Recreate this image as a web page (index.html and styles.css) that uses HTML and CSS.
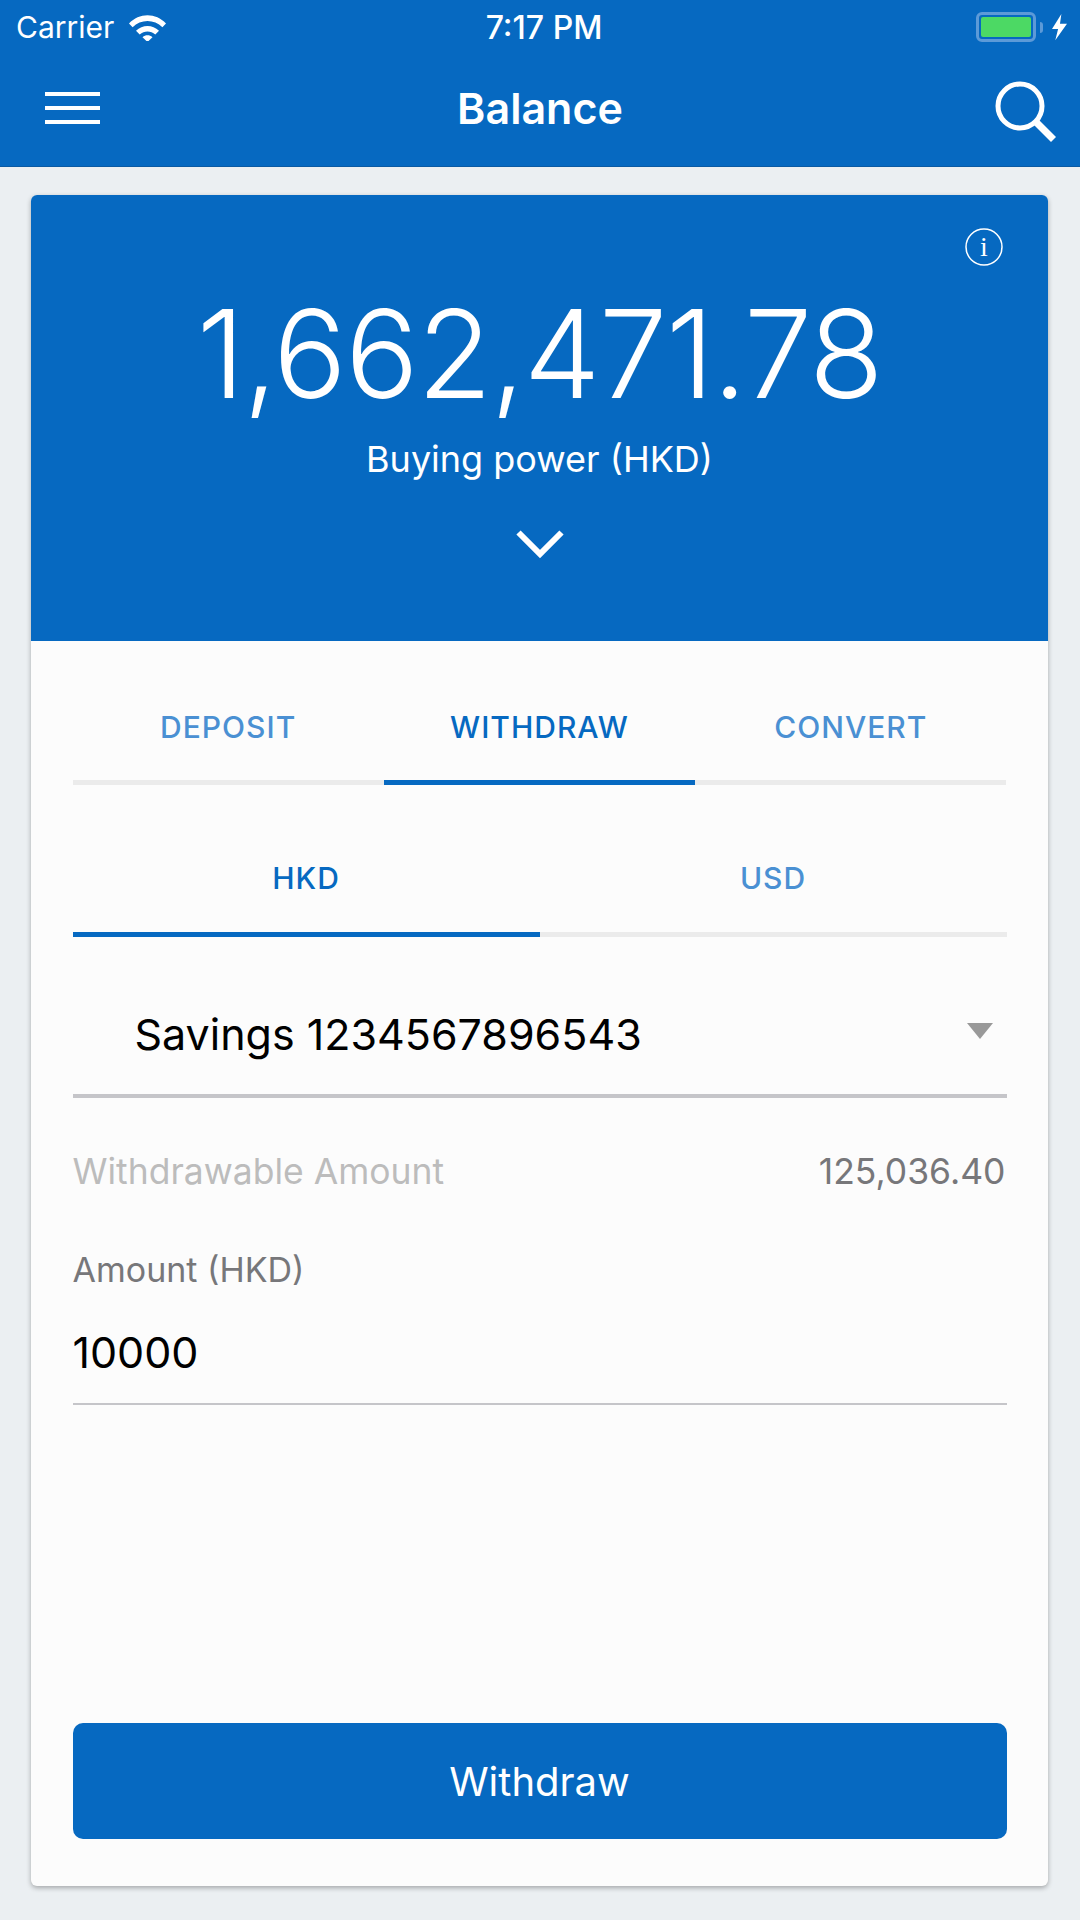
FILE: index.html
```html
<!DOCTYPE html>
<html lang="en">
<head>
    <meta charset="UTF-8">
    <meta name="viewport" content="width=device-width, initial-scale=1.0">
    <title>Balance</title>
    <link rel="stylesheet" href="styles.css">
</head>
<body>
    <header class="top">
        <div class="status">
            <div class="status_left">
                <span>Carrier</span>
                <svg class="wifi" width="37" height="27" viewBox="0 0 37 27">
                    <path d="M0 9.5C10-1.5 27-1.5 37 9.5l-3.6 3.8C25.300 5 11.700 5 3.600 13.300z" fill="#fff"/>
                    <path d="M7 16.800c6.500-6.500 16.500-6.500 23 0l-3.700 3.800c-4.500-4.200-11.100-4.200-15.600 0z" fill="#fff"/>
                    <path d="M13.500 23.200c3-2.600 7-2.600 10 0l-5 4.800z" fill="#fff"/>
                </svg>
            </div>
            <div class="status_time">7:17 PM</div>
            <div class="status_right">
                <div class="battery"><div class="battery_fill"></div></div>
                <div class="battery_tip"></div>
                <svg class="bolt" width="15" height="28" viewBox="0 0 16 28">
                    <path d="M10 0L0 16h6.500L3.500 28 16 10.500H8.500z" fill="#fff"/>
                </svg>
            </div>
        </div>
        <div class="nav">
            <div class="menu_icon"><i></i><i></i><i></i></div>
            <div class="nav_title">Balance</div>
            <svg class="search" width="62" height="62" viewBox="0 0 62 62">
                <circle cx="25" cy="25" r="22" fill="none" stroke="#fff" stroke-width="5"/>
                <path d="M41 41L58.500 58.500" stroke="#fff" stroke-width="7" fill="none"/>
            </svg>
        </div>
    </header>

    <main class="card">
        <section class="power">
            <svg class="info" width="38" height="38" viewBox="0 0 38 38">
                <circle cx="19" cy="19" r="18" fill="none" stroke="#fff" stroke-width="1.500"/>
                <text x="19" y="28" text-anchor="middle" class="info_i">i</text>
            </svg>
            <div class="power_num">1,662,471.78</div>
            <div class="power_label">Buying power (HKD)</div>
            <svg class="chevron" width="48" height="30" viewBox="0 0 48 30">
                <path d="M2.500 3.500L24 25 45.500 3.500" fill="none" stroke="#fff" stroke-width="6"/>
            </svg>
        </section>

        <section class="form">
            <div class="tabs tabs_main">
                <div class="tab">DEPOSIT</div>
                <div class="tab active">WITHDRAW</div>
                <div class="tab">CONVERT</div>
            </div>
            <div class="tabs tabs_sub">
                <div class="tab active">HKD</div>
                <div class="tab">USD</div>
            </div>

            <div class="select">
                <span>Savings 1234567896543</span>
                <div class="select_arrow"></div>
            </div>

            <div class="limit">
                <span class="limit_label">Withdrawable Amount</span>
                <span class="limit_value">125,036.40</span>
            </div>

            <div class="field_label">Amount (HKD)</div>
            <div class="field_value">10000</div>

            <button class="submit">Withdraw</button>
        </section>
    </main>
</body>
</html>
```

FILE: styles.css
```css
*{margin:0;padding:0;box-sizing:border-box;}
html,body{width:1080px;height:1920px;}
body{
    background:#ebeff2;
    font-family:Inter,"Liberation Sans",sans-serif;
    display:flex;
    flex-direction:column;
    overflow:hidden;
}

/* top bar */
.top{
    height:167px;
    background:#0669c1;
    border-bottom:1px solid #0a5aa3;
    color:#fff;
    flex:none;
}
.status{
    height:54px;
    padding:0 13px 0 16px;
    display:flex;
    align-items:center;
    justify-content:space-between;
    position:relative;
    font-size:30px;
}
.status_left{display:flex;align-items:center;gap:15px;}
.status_time{
    position:absolute;
    left:8px;
    right:0;
    text-align:center;
    font-size:32px;
    font-weight:500;
}
.status_right{display:flex;align-items:center;}
.battery{
    width:60px;
    height:30px;
    border:3px solid #5c9ad8;
    border-radius:6px;
    padding:2px;
}
.battery_fill{height:100%;background:#4cd964;border-radius:2px;}
.battery_tip{
    width:3px;
    height:11px;
    background:#5c9ad8;
    border-radius:0 4px 4px 0;
    margin-left:4px;
    margin-right:9px;
}

.nav{
    height:112px;
    padding:0 23px 0 45px;
    display:flex;
    align-items:center;
    justify-content:space-between;
    position:relative;
}
.menu_icon{width:55px;display:flex;flex-direction:column;gap:10px;margin-top:-5px;}
.menu_icon i{display:block;height:4px;background:#fff;}
.nav_title{
    position:absolute;
    left:0;
    right:0;
    top:28px;
    text-align:center;
    font-size:43px;
    font-weight:600;
}
.search{margin-top:3px;}

/* main card */
.card{
    margin:28px 32px 0 31px;
    height:1691px;
    background:#fcfcfc;
    border-radius:6px;
    box-shadow:0 2px 5px rgba(0,0,0,0.3);
    overflow:hidden;
    display:flex;
    flex-direction:column;
}
.power{
    height:446px;
    background:#0669c1;
    color:#fff;
    display:flex;
    flex-direction:column;
    align-items:center;
    position:relative;
    flex:none;
}
.info{position:absolute;top:33px;right:45px;}
.info_i{font-family:"Liberation Serif",serif;font-size:28px;fill:#fff;}
.power_num{
    margin-top:86px;
    font-size:122px;
    line-height:146px;
    font-weight:300;
    letter-spacing:-1.400px;
}
.power_label{
    margin-top:10px;
    font-size:36px;
    line-height:44px;
}
.chevron{margin-top:48px;}

.form{
    flex:1;
    padding:0 41.500px 47px;
    display:flex;
    flex-direction:column;
}
.tabs{display:flex;}
.tab{
    flex:1;
    height:100%;
    text-align:center;
    color:#4a90d3;
    font-size:30px;
    font-weight:500;
    letter-spacing:1px;
    border-bottom:5px solid #ebebeb;
}
.tab.active{color:#0669c1;border-bottom-color:#0669c1;}
.tabs_main{height:144px;}
.tabs_main .tab{padding-top:68px;}
.tabs_sub{height:152px;}
.tabs_sub .tab{padding-top:75px;}

.select{
    height:161px;
    padding:36px 15px 0 62px;
    display:flex;
    align-items:center;
    justify-content:space-between;
    font-size:43px;
    color:#000;
    border-bottom:4px solid #c5c5c9;
}
.select_arrow{
    width:0;
    height:0;
    border-left:13px solid transparent;
    border-right:13px solid transparent;
    border-top:16px solid #999;
    margin-top:-5px;
    margin-right:-1px;
}

.limit{
    margin-top:52px;
    padding-right:1px;
    display:flex;
    justify-content:space-between;
    font-size:35.500px;
    line-height:44px;
}
.limit_label{color:#bcbcbc;}
.limit_value{color:#77777a;}
.field_label{
    margin-top:56px;
    font-size:34px;
    line-height:40px;
    color:#77777a;
}
.field_value{
    margin-top:35px;
    padding-bottom:24px;
    font-size:43px;
    line-height:54px;
    color:#000;
    border-bottom:2px solid #c5c5c9;
}
.submit{
    margin-top:auto;
    height:116px;
    flex:none;
    border:none;
    border-radius:10px;
    background:#0669c1;
    color:#fff;
    font-family:inherit;
    font-size:40px;
}
```
